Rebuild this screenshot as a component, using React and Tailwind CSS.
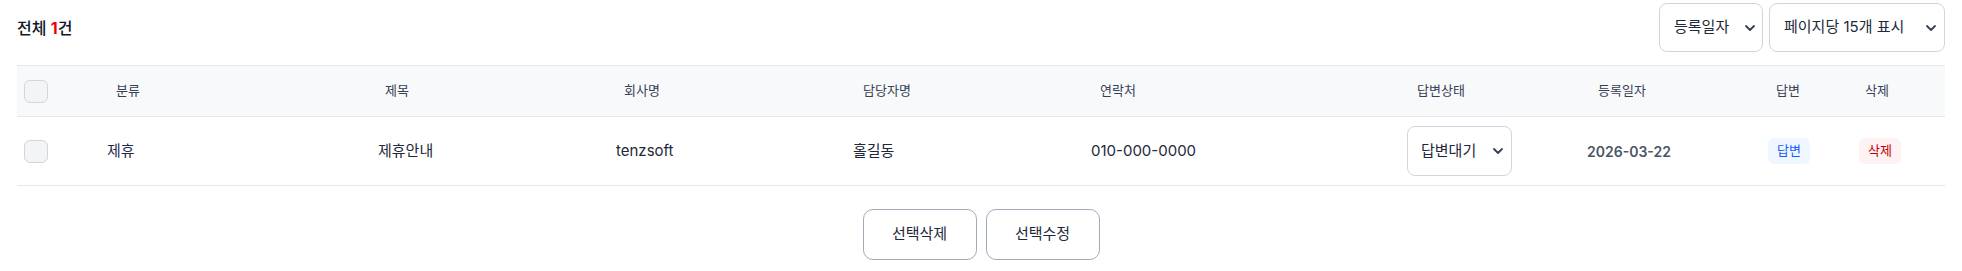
import React from 'react';
import { ChevronDown } from 'lucide-react';

// 열 너비 (표 왼쪽 기준)
const cols = 'grid grid-cols-[90px_271px_238px_237px_238px_316px_180px_181px_91px_1fr]';

const rows = [
    {
        id: 1,
        category: '제휴',
        title: '제휴안내',
        company: 'tenzsoft',
        manager: '홀길동',
        phone: '010-000-0000',
        status: '답변대기',
        date: '2026-03-22',
    },
];

const Check = () => (
    <input
        type="checkbox"
        className="appearance-none w-6 h-[23px] rounded-md border border-gray-300 bg-gray-100 block"
    />
);

const Select = ({ label, className }) => (
    <div className={`flex items-center justify-between border border-gray-300 rounded-lg bg-white text-[15px] text-gray-800 ${className}`}>
        <span>{label}</span>
        <ChevronDown size={16} strokeWidth={2.75} className="text-gray-700" />
    </div>
);

const App = () => {
    return (
        <div className="font-['Inter','Noto_Sans_CJK_KR',sans-serif] bg-white w-full h-[271px] pl-[17px] pr-[17px] pt-[3px]">
            {/* 상단 바 */}
            <div className="flex items-center justify-between h-[49px]">
                <h2 className="text-[16px] font-medium text-gray-900">
                    전체 <span className="text-red-600 font-bold">1</span>건
                </h2>
                <div className="flex gap-[6px]">
                    <Select label="등록일자" className="w-[104px] h-[49px] pl-[14px] pr-[4px]" />
                    <Select label="페이지당 15개 표시" className="w-[176px] h-[49px] pl-[14px] pr-[5px]" />
                </div>
            </div>

            {/* 표 */}
            <div className="mt-[13px]">
                <div className={`${cols} items-center h-[52px] bg-[#f8f9fb] border-y border-gray-200 text-[13px] text-gray-700`}>
                    <div className="pl-[7px]"><Check /></div>
                    <div className="pl-[9px]">분류</div>
                    <div className="pl-[7px]">제목</div>
                    <div className="pl-[8px]">회사명</div>
                    <div className="pl-[10px]">담당자명</div>
                    <div className="pl-[9px]">연락처</div>
                    <div className="pl-[10px]">답변상태</div>
                    <div className="pl-[11px]">등록일자</div>
                    <div className="pl-[8px]">답변</div>
                    <div className="pl-[6px]">삭제</div>
                </div>

                {rows.map((row) => (
                    <div key={row.id} className={`${cols} items-center h-[69px] border-b border-gray-200 text-[15px] text-gray-800`}>
                        <div className="pl-[7px]"><Check /></div>
                        <div className="text-[#1f2d4d]">{row.category}</div>
                        <div>{row.title}</div>
                        <div>{row.company}</div>
                        <div>{row.manager}</div>
                        <div>{row.phone}</div>
                        <div>
                            <Select label={row.status} className="w-[105px] h-[50px] pl-[13px] pr-[5px]" />
                        </div>
                        <div className="text-[14px] font-semibold text-gray-600">{row.date}</div>
                        <div>
                            <span className="inline-block px-[9px] py-[3px] rounded-md bg-blue-50 text-blue-600 text-[13px]">답변</span>
                        </div>
                        <div>
                            <span className="inline-block px-[9px] py-[3px] rounded-md bg-red-50 text-red-700 text-[13px]">삭제</span>
                        </div>
                    </div>
                ))}
            </div>

            {/* 하단 버튼 */}
            <div className="flex justify-center gap-[9px] mt-[23px]">
                <button className="w-[114px] h-[51px] rounded-[10px] border border-[#a3aab8] bg-white text-[15px] text-gray-800">
                    선택삭제
                </button>
                <button className="w-[114px] h-[51px] rounded-[10px] border border-[#a3aab8] bg-white text-[15px] text-gray-800">
                    선택수정
                </button>
            </div>
        </div>
    );
};

export default App;
